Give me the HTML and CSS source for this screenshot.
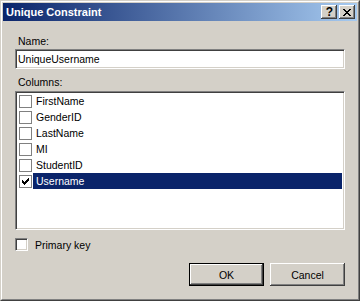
FILE: index.html
```html
<!DOCTYPE html>
<html>
<head>
<meta charset="utf-8">
<link rel="stylesheet" href="styles.css">
</head>
<body>
<div class="window">
  <div class="frame">
    <div class="titlebar">
      <span class="title">Unique Constraint</span>
      <div class="tb-btns">
        <div class="tb-btn help">?</div>
        <div class="tb-btn close">
          <svg width="8" height="7" viewBox="0 0 8 7" shape-rendering="crispEdges"><path d="M0 0h2v1h-2zM6 0h2v1h-2zM1 1h2v1h-2zM5 1h2v1h-2zM2 2h4v1h-4zM3 3h2v1h-2zM2 4h4v1h-4zM1 5h2v1h-2zM5 5h2v1h-2zM0 6h2v1h-2zM6 6h2v1h-2z" fill="#000"/></svg>
        </div>
      </div>
    </div>
    <div class="content">
      <div class="label label-name">Name:</div>
      <div class="textbox">UniqueUsername</div>
      <div class="label label-cols">Columns:</div>
      <div class="listbox">
        <div class="row"><span class="flatchk"></span><span class="item">FirstName</span></div>
        <div class="row"><span class="flatchk"></span><span class="item">GenderID</span></div>
        <div class="row"><span class="flatchk"></span><span class="item">LastName</span></div>
        <div class="row"><span class="flatchk"></span><span class="item">MI</span></div>
        <div class="row"><span class="flatchk"></span><span class="item">StudentID</span></div>
        <div class="row"><span class="flatchk checked"><svg width="7" height="7" viewBox="0 0 7 7" shape-rendering="crispEdges"><path d="M6 0h1v1h-1zM5 1h2v1h-2zM0 2h1v1h-1zM4 2h3v1h-3zM0 3h2v1h-2zM3 3h3v1h-3zM0 4h5v1h-5zM1 5h3v1h-3zM2 6h1v1h-1z" fill="#000"/></svg></span><span class="item selected">Username</span></div>
      </div>
      <div class="pk"><span class="chk3d"></span><span class="pk-text">Primary key</span></div>
      <div class="buttons">
        <div class="btn default"><span>OK</span></div>
        <div class="btn"><span>Cancel</span></div>
      </div>
    </div>
  </div>
</div>
</body>
</html>
```
FILE: styles.css
```css
html, body {
  margin: 0;
  padding: 0;
  background: #d4d0c8;
}
body {
  font-family: "Liberation Sans", Arial, sans-serif;
  font-size: 10.5px;
  color: #000;
}
.window {
  width: 360px;
  height: 301px;
  box-sizing: border-box;
  background: #d4d0c8;
  border: 1px solid;
  border-color: #d4d0c8 #404040 #404040 #d4d0c8;
}
.frame {
  height: 100%;
  box-sizing: border-box;
  border: 1px solid;
  border-color: #ffffff #808080 #808080 #ffffff;
  padding: 1px;
  display: flex;
  flex-direction: column;
}
.titlebar {
  height: 18px;
  background: linear-gradient(to right, #0a246a, #a6caf0);
  display: flex;
  align-items: center;
  justify-content: space-between;
  padding: 0 2px 0 3px;
}
.title {
  color: #fff;
  font-weight: bold;
  font-size: 11px;
  line-height: 13px;
}
.tb-btns {
  display: flex;
  gap: 2px;
}
.tb-btn {
  width: 16px;
  height: 14px;
  box-sizing: border-box;
  background: #d4d0c8;
  box-shadow: inset -1px -1px #404040, inset 1px 1px #ffffff, inset -2px -2px #808080;
  display: flex;
  align-items: center;
  justify-content: center;
}
.tb-btn.help {
  font-weight: bold;
  font-size: 12px;
  line-height: 14px;
  padding-left: 1px;
}
.tb-btn.close svg {
  display: block;
}
.content {
  padding: 0 12px;
  display: flex;
  flex-direction: column;
}
.label {
  line-height: 13px;
  padding-left: 3px;
}
.label-name {
  margin-top: 14px;
}
.textbox {
  margin-top: 1px;
  width: 330px;
  height: 20px;
  box-sizing: border-box;
  background: #fff;
  border: 1px solid;
  border-color: #808080 #ffffff #ffffff #808080;
  box-shadow: inset 1px 1px #404040, inset -1px -1px #d4d0c8;
  padding-left: 2px;
  line-height: 18px;
}
.label-cols {
  margin-top: 7px;
}
.listbox {
  margin-top: 2px;
  width: 330px;
  height: 139px;
  box-sizing: border-box;
  background: #fff;
  border: 1px solid;
  border-color: #808080 #ffffff #ffffff #808080;
  box-shadow: inset 1px 1px #404040, inset -1px -1px #d4d0c8;
  padding: 1px 2px 1px 1px;
}
.row {
  height: 16px;
  display: flex;
  align-items: flex-start;
}
.flatchk {
  width: 13px;
  height: 13px;
  box-sizing: border-box;
  border: 1px solid #808080;
  background: #fff;
  margin: 2px 1px 0 2px;
  flex: none;
  position: relative;
}
.flatchk svg {
  position: absolute;
  left: 2px;
  top: 2px;
}
.item {
  height: 16px;
  line-height: 16px;
  padding-left: 3px;
  flex: 1;
}
.item.selected {
  background: #0a246a;
  color: #fff;
}
.pk {
  margin-top: 8px;
  display: flex;
  align-items: center;
  height: 13px;
}
.chk3d {
  width: 13px;
  height: 13px;
  box-sizing: border-box;
  background: #fff;
  border: 1px solid;
  border-color: #808080 #ffffff #ffffff #808080;
  box-shadow: inset 1px 1px #404040, inset -1px -1px #d4d0c8;
  flex: none;
}
.pk-text {
  margin-left: 7px;
  line-height: 13px;
  margin-top: 2px;
}
.buttons {
  margin-top: 12px;
  display: flex;
  justify-content: flex-end;
  gap: 6px;
}
.btn {
  width: 75px;
  height: 23px;
  box-sizing: border-box;
  background: #d4d0c8;
  box-shadow: inset -1px -1px #404040, inset 1px 1px #ffffff, inset -2px -2px #808080;
  display: flex;
  align-items: center;
  justify-content: center;
  line-height: 13px;
}
.btn.default {
  border: 1px solid #000;
}
.btn span {
  margin-top: 1px;
}
```
